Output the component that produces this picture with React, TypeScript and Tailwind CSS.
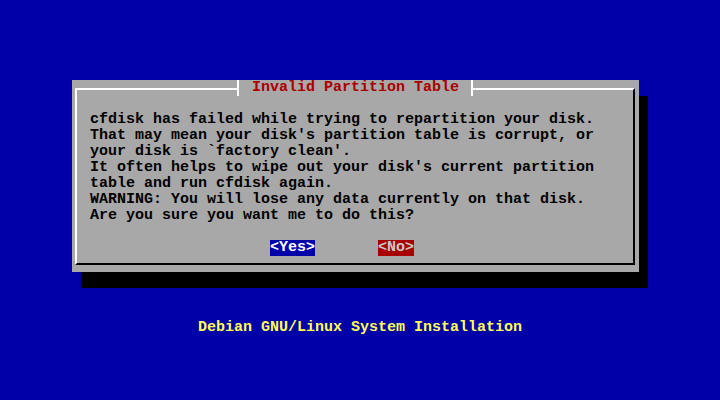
import React from "react";

// 80x25 text console, one cell = 9x16 px
const lines = [
  "cfdisk has failed while trying to repartition your disk.",
  "That may mean your disk's partition table is corrupt, or",
  "your disk is `factory clean'.",
  "It often helps to wipe out your disk's current partition",
  "table and run cfdisk again.",
  "WARNING: You will lose any data currently on that disk.",
  "Are you sure you want me to do this?",
];

const Dialog = () => {
  return (
    <div className="ml-[72px] w-[567px] h-[192px] bg-[#a8a8a8] shadow-[9px_16px_0_#000] pt-2 pl-[3px] pr-[4px] pb-[7px]">
      <div className="h-full border-t-2 border-l-2 border-white border-r-2 border-b-2 border-r-black border-b-black">
        {/* title sits on the top border */}
        <div className="flex h-4 -mt-[10px] ml-[160px]">
          <span className="h-4 bg-[#a8a8a8] border-l-2 border-r-2 border-white pl-[13px] pr-[12px] text-[#a80000] whitespace-pre">
            Invalid Partition Table
          </span>
        </div>

        <div className="mt-4 pl-[13px] text-black">
          {lines.map((line, i) => (
            <div key={i} className="h-4 whitespace-pre">
              {line}
            </div>
          ))}
        </div>

        <div className="flex mt-4 pl-[193px] gap-[63px]">
          <span className="h-4 bg-[#0000a8] text-white whitespace-pre">{"<Yes>"}</span>
          <span className="h-4 bg-[#a80000] text-[#c8c8c8] whitespace-pre">{"<No>"}</span>
        </div>
      </div>
    </div>
  );
};

export default function App() {
  return (
    <div className="w-[720px] h-[400px] overflow-hidden bg-[#0000a8] pt-[80px] font-['Liberation_Mono',monospace] font-bold text-[15px] leading-4">
      <Dialog />
      <div className="mt-12 text-center text-[#ffff54] whitespace-pre">
        Debian GNU/Linux System Installation
      </div>
    </div>
  );
}
